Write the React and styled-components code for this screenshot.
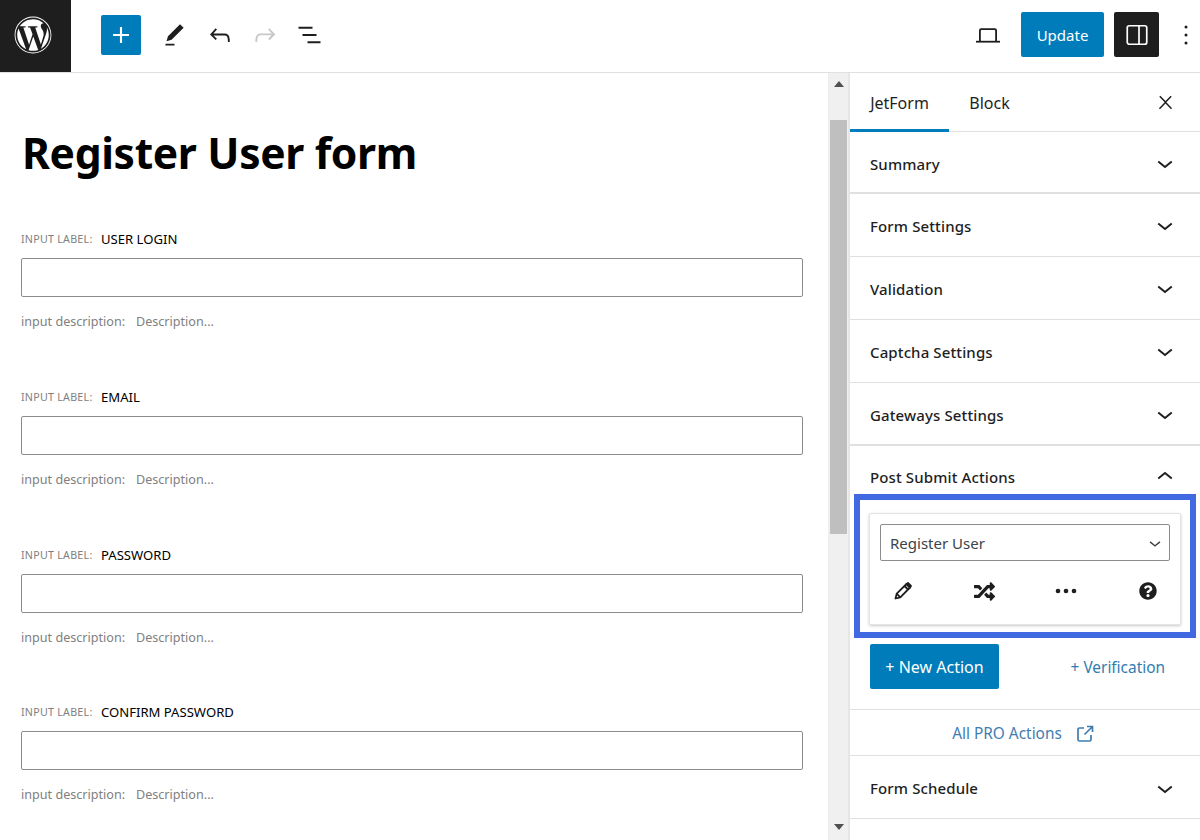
import React from 'react';
import styled, { createGlobalStyle } from 'styled-components';
import { FaWordpress, FaRandom, FaQuestionCircle } from 'react-icons/fa';

const Global = createGlobalStyle`
  html, body { margin: 0; padding: 0; background: #fff; }
  * { box-sizing: border-box; }
  body { font-family: "Noto Sans", "Open Sans", sans-serif; color: #1e1e1e; }
`;
const Page = styled.div`width: 1200px; height: 840px; overflow: hidden; display: flex; flex-direction: column;`;
const TopBar = styled.header`height: 73px; flex: none; display: flex; align-items: center; border-bottom: 1px solid #e0e0e0;`;
const LogoBox = styled.div`width: 71px; height: 72px; padding: 0 5px 2px 0; background: #1e1e1e; color: #fff; display: flex; align-items: center; justify-content: center;`;
const Inserter = styled.div`width: 40px; height: 40px; margin: 0 11px 2px 30px; border-radius: 2px; background: #007cba; color: #fff; display: flex; align-items: center; justify-content: center;`;
const ToolIcon = styled.div`width: 45px; height: 40px; margin-bottom: 2px; display: flex; align-items: center; justify-content: center; color: ${p => p.$muted ? '#c8c8c8' : '#1e1e1e'};`;
const Spacer = styled.div`flex: 1;`;
const UpdateBtn = styled.div`width: 83px; height: 45px; margin: 0 0 3px 11px; padding-top: 1px; border-radius: 2px; background: #007cba; color: #fff; font-size: 15px; display: flex; align-items: center; justify-content: center;`;
const PanelToggle = styled.div`width: 45px; height: 45px; margin: 0 0 3px 10px; border-radius: 2px; background: #1e1e1e; color: #fff; display: flex; align-items: center; justify-content: center;`;
const MoreBtn = styled.div`width: 41px; height: 45px; margin-bottom: 3px; padding-left: 13px; display: flex; align-items: center; justify-content: center; color: #1e1e1e;`;
const Body = styled.div`flex: 1; min-height: 0; display: flex;`;
const Editor = styled.main`flex: 1; min-width: 0; padding: 0 0 0 21px; overflow: hidden;`;
const Title = styled.h1`margin: 49px 0 47.4px 1px; font-size: 42.6px; line-height: 60px; font-weight: 700; color: #000; letter-spacing: -0.35px;`;
const Field = styled.section`width: 782px; height: 157.67px;`;
const LabelRow = styled.div`display: flex; align-items: center; height: 20px; margin-bottom: 9px;`;
const SmallLabel = styled.span`font-size: 10.7px; color: #808080; width: 80px; letter-spacing: 0.25px;`;
const FieldName = styled.span`font-size: 13.1px; color: #000;`;
const Input = styled.div`height: 39px; border: 1px solid #8c8c8c; border-radius: 2px;`;
const DescRow = styled.div`display: flex; margin-top: 16px; height: 18px; line-height: 18px; font-size: 12.6px; color: #808080;`;
const DescLabel = styled.span`width: 115px;`;
const Scrollbar = styled.div`width: 22px; flex: none; background: #f0f0f0; border-right: 2px solid #e6e6e6; border-left: 1px solid #ededed; display: flex; flex-direction: column; align-items: center; padding: 0 1px;`;
const ArrowBox = styled.div`height: 47px; flex: none; width: 100%; padding-top: 8px; display: flex; justify-content: center; color: #505050;`;
const Thumb = styled.div`height: 414px; width: 17px; background: #bfbfbf; flex: none;`;
const Track = styled.div`flex: 1;`;
const ArrowBottom = styled.div`height: 16px; flex: none; display: flex; justify-content: center; color: #505050;`;
const Sidebar = styled.aside`width: 350px; flex: none; overflow: hidden;`;
const Tabs = styled.div`height: 59px; display: flex; align-items: center; border-bottom: 1px solid #e0e0e0;`;
const Tab = styled.div`height: 59px; width: ${p => p.$w}px; font-size: 16px; padding-top: 20px; line-height: 20px; text-align: center; color: #1e1e1e; ${p => p.$active ? 'border-bottom: 3px solid #007cba;' : ''}`;
const CloseBtn = styled.div`margin-left: auto; margin-right: 24px; margin-top: 1px; display: flex; color: #1e1e1e;`;
const PanelHead = styled.div`height: ${p => p.$h || 63}px; display: flex; align-items: center; justify-content: space-between; padding: ${p => p.$pt || 0}px 20px 0 20px; font-size: 15px; font-weight: 500; letter-spacing: 0.12px; color: #1e1e1e; border-bottom: ${p => p.$open ? 'none' : '1px solid #e0e0e0'}; ${p => p.$thick ? 'border-bottom-width: 2px;' : ''}`;
const PanelLabel = styled.span`padding-top: ${p => p.$nudge ? 2 : 0}px;`;
const HighlightBox = styled.div`margin: 0 4px; height: 144px; border: 6px solid #4169e1; padding: 13px 9px 0 9px;`;
const ActionCard = styled.div`height: 112px; background: #fff; border: 1px solid #e4e4e4; border-radius: 2px; box-shadow: 0 1px 3px rgba(0,0,0,.22); padding: 10px;`;
const FakeSelect = styled.div`height: 37px; border: 1px solid #8c8c8c; border-radius: 2px; display: flex; align-items: center; justify-content: space-between; padding: 0 3px 0 9px; font-size: 15px; color: #3c434a;`;
const IconRow = styled.div`display: flex; justify-content: space-between; margin-top: 15px; padding: 0 7px 0 8px; color: #1e1e1e; height: 30px;`;
const IconCell = styled.div`width: 30px; height: 30px; display: flex; align-items: center; justify-content: center;`;
const ActionsRow = styled.div`display: flex; align-items: center; justify-content: space-between; margin-top: 6px; padding: 0 35px 21px 20px; height: 66px; border-bottom: 1px solid #e0e0e0;`;
const NewAction = styled.div`width: 129px; height: 45px; padding-top: 2px; border-radius: 2px; background: #007cba; color: #fff; font-size: 16px; display: flex; align-items: center; justify-content: center;`;
const VerLink = styled.span`font-size: 15.4px; padding-top: 2px; color: #2f7cb0;`;
const ProRow = styled.div`height: 46px; padding: 2px 4px 0 0; border-bottom: 1px solid #e0e0e0; display: flex; align-items: center; justify-content: center; gap: 14px; font-size: 15.4px; color: #3f7db0;`;

const Ic = ({ d, size = 24 }) => (
  <svg width={size} height={size} viewBox="0 0 24 24" fill="currentColor"><path d={d} /></svg>
);
const down = 'M17.9 11.4L12 16.200l-5.900-4.800 1-1.200L12 14.200l4.900-4 1 1.200z';
const up = 'M6.100 12.600L12 7.800l5.900 4.800-1 1.200L12 9.800l-4.900 4-1-1.200z';
const Panel = ({ children, thick, h, pt, nudge = true }) => (
  <PanelHead $thick={thick} $h={h} $pt={pt}>
    <PanelLabel $nudge={nudge}>{children}</PanelLabel>
    <Ic d={down} size={30} />
  </PanelHead>
);

const fields = ['USER LOGIN', 'EMAIL', 'PASSWORD', 'CONFIRM PASSWORD'];

export default function App() {
  return (
    <Page>
      <Global />
      <TopBar>
        <LogoBox><FaWordpress size={38} /></LogoBox>
        <Inserter><Ic size={32} d="M18 11.200h-5.200V6h-1.600v5.200H6v1.600h5.200V18h1.600v-5.200H18z" /></Inserter>
        <ToolIcon><Ic size={27} d="M20.100 5.100L16.900 2 6.200 12.700l-1.300 4.400 4.500-1.300L20.100 5.100zM4 20.800h8v-1.500H4v1.500z" /></ToolIcon>
        <ToolIcon><Ic size={30} d="M18.300 11.700c-.6-.6-1.400-.9-2.300-.9H6.700l2.900-3.300-1.100-1-4.500 5L8.500 16l1-1-2.700-2.700H16c.5 0 .9.2 1.300.5 1 1 1 3.400 1 4.500v.3h1.500v-.2c0-1.500 0-4.300-1.500-5.700z" /></ToolIcon>
        <ToolIcon $muted><Ic size={30} d="M15.600 6.500l-1.100 1 2.900 3.300H8c-.9 0-1.700.3-2.300.9-1.400 1.500-1.400 4.200-1.400 5.600v.2h1.500v-.3c0-1.100 0-3.500 1-4.500.3-.3.7-.5 1.300-.5h9.200L14.500 15l1.100 1.100 4.600-4.600-4.600-5z" /></ToolIcon>
        <ToolIcon><Ic d="M.5 3.800h14v2h-14zM4.500 11h14v2h-14zM9.500 18.200h13v2h-13z" /></ToolIcon>
        <Spacer />
        <ToolIcon>
          <svg width="26" height="26" viewBox="0 0 26 26" fill="none" stroke="currentColor" strokeWidth="1.800"><path d="M4.900 19V8.500c0-.7.5-1.300 1.200-1.300h13.800c.7 0 1.200.6 1.200 1.300V19" /><path d="M1 19.700h24" /></svg>
        </ToolIcon>
        <UpdateBtn>Update</UpdateBtn>
        <PanelToggle>
          <svg width="24" height="24" viewBox="0 0 24 24" fill="none" stroke="currentColor" strokeWidth="1.700"><rect x="2.250" y="2.750" width="19.500" height="18.500" rx="2" /><path d="M14 2.750v18.500" /></svg>
        </PanelToggle>
        <MoreBtn>
          <svg width="24" height="24" viewBox="0 0 24 24" fill="currentColor"><circle cx="12" cy="4" r="1.500" /><circle cx="12" cy="12" r="1.500" /><circle cx="12" cy="20" r="1.500" /></svg>
        </MoreBtn>
      </TopBar>
      <Body>
        <Editor>
          <Title>Register User form</Title>
          {fields.map(name => (
            <Field key={name}>
              <LabelRow><SmallLabel>INPUT LABEL:</SmallLabel><FieldName>{name}</FieldName></LabelRow>
              <Input />
              <DescRow><DescLabel>input description:</DescLabel><span>Description...</span></DescRow>
            </Field>
          ))}
        </Editor>
        <Scrollbar>
          <ArrowBox><svg width="10" height="6" viewBox="0 0 10 6" fill="currentColor"><path d="M5 0l5 6H0z" /></svg></ArrowBox>
          <Thumb />
          <Track />
          <ArrowBottom><svg width="10" height="6" viewBox="0 0 10 6" fill="currentColor"><path d="M0 0h10L5 6z" /></svg></ArrowBottom>
        </Scrollbar>
        <Sidebar>
          <Tabs>
            <Tab $active $w={99}>JetForm</Tab>
            <Tab $w={81}>Block</Tab>
            <CloseBtn><Ic size={21} d="M13 11.800l6.100-6.300-1.200-1.200-5.900 6.100-5.900-6.100-1.200 1.200 6.100 6.300-6.500 6.700 1.200 1.200 6.300-6.500 6.300 6.500 1.200-1.200z" /></CloseBtn>
          </Tabs>
          <Panel thick h={62} pt={1}>Summary</Panel>
          <Panel>Form Settings</Panel>
          <Panel>Validation</Panel>
          <Panel>Captcha Settings</Panel>
          <Panel thick>Gateways Settings</Panel>
          <PanelHead $open $h={48} $pt={14}>Post Submit Actions<Ic d={up} size={30} /></PanelHead>
          <HighlightBox>
            <ActionCard>
              <FakeSelect>Register User<Ic d={down} size={22} /></FakeSelect>
              <IconRow>
                <IconCell>
                  <svg width="20" height="20" viewBox="0 0 20 20" fill="none" stroke="currentColor" strokeWidth="1.800" strokeLinejoin="round"><path d="M2.500 17.500l1.200-4.800L13.500 3l3.500 3.500-9.700 9.800z" /><path d="M11.500 5l3.500 3.500M3.700 12.700l3.600 3.600" /><path d="M13.500 3l3.500 3.500 1-1.500-3-3z" fill="currentColor" /></svg>
                </IconCell>
                <IconCell><FaRandom size={21} /></IconCell>
                <IconCell>
                  <svg width="24" height="8" viewBox="0 0 24 8" fill="currentColor"><circle cx="4" cy="4" r="2.300" /><circle cx="12" cy="4" r="2.300" /><circle cx="20" cy="4" r="2.300" /></svg>
                </IconCell>
                <IconCell><FaQuestionCircle size={18} /></IconCell>
              </IconRow>
            </ActionCard>
          </HighlightBox>
          <ActionsRow>
            <NewAction>+ New Action</NewAction>
            <VerLink>+ Verification</VerLink>
          </ActionsRow>
          <ProRow>
            All PRO Actions
            <svg width="18" height="18" viewBox="0 0 18 18" fill="none" stroke="currentColor" strokeWidth="1.700"><path d="M8 3H3.500C2.700 3 2 3.700 2 4.500v10c0 .8.700 1.500 1.500 1.500h10c.8 0 1.500-.7 1.500-1.500V10" /><path d="M11 1.500h5.500V7M16.500 1.500L8.500 9.500" /></svg>
          </ProRow>
          <Panel pt={1} nudge={false}>Form Schedule</Panel>
        </Sidebar>
      </Body>
    </Page>
  );
}
